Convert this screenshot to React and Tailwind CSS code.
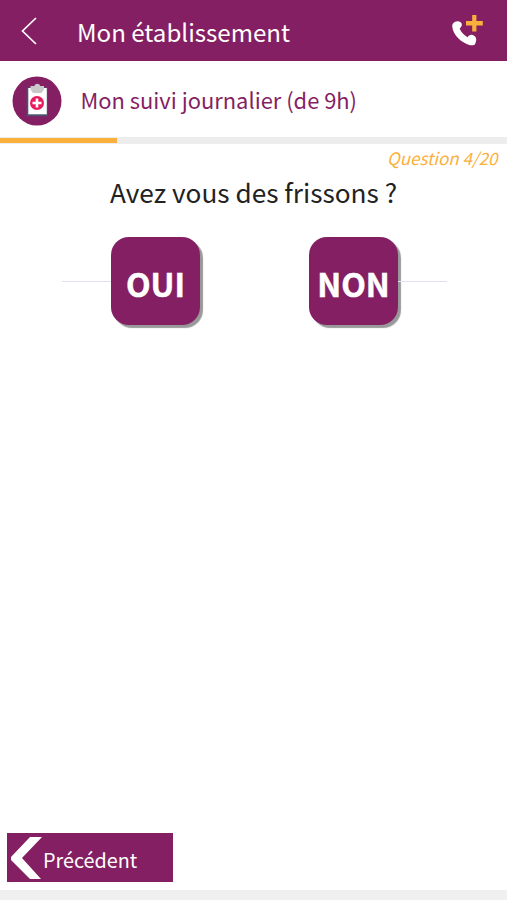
function BackIcon() {
  return (
    <svg className="h-7 w-4" viewBox="0 0 16 28" fill="none" stroke="#fff" strokeWidth="1.7">
      <path d="M15 1 L1.5 14 L15 27" />
    </svg>
  );
}

function PhoneIcon() {
  return (
    <svg className="h-8 w-8" viewBox="0 0 32 32">
      <path
        d="M1.2 8.2 C2.8 6 6.5 5.4 8.6 7.2 C10.8 9.2 9.8 11.6 7.6 13.6 C9.2 17.6 12 20.2 15.6 22.2 C16.6 20.2 19.2 19 21.8 20.4 C24.8 22.2 24.8 25 23 29.2 C21.4 31 17.2 30.6 12.8 28 C6.8 24.6 1.4 19 .4 12.4 C.1 10.6 .3 9.2 1.2 8.2 Z"
        fill="#fff"
      />
      <path d="M20.2 0 h4.2 v6.1 h6.4 v4.3 h-6.4 v6.2 h-4.2 v-6.2 h-6.2 v-4.3 h6.2 z" fill="#fbb03b" />
    </svg>
  );
}

function ClipboardIcon() {
  return (
    <svg className="size-[50px]" viewBox="0 0 50 50">
      <circle cx="25" cy="25" r="24.5" fill="#851f63" />
      <path d="M14.6 11.5 H35.8 V40.3 H14.6 Z" fill="#4b5070" />
      <path d="M16.3 12 H34.8 V38.3 H16.3 Z" fill="#fff" />
      <path d="M18.5 10 H22.5 C22.8 7 27.8 7 28.1 10 H32 V13.5 L29.5 17 H21 L18.5 13.5 Z" fill="#c9c9c9" />
      <circle cx="25" cy="27" r="7" fill="#e81b5d" />
      <path d="M25 22.5 V31.5 M20.5 27 H29.5" stroke="#fff" strokeWidth="2.6" />
    </svg>
  );
}

function Answer({ label }) {
  return (
    <button className="flex h-[88px] w-[89px] items-center justify-center rounded-[18px] bg-[#851f63] pt-[3px] text-[32px] leading-none font-bold text-white shadow-[3px_3px_1px_#999] [-webkit-text-stroke:0.5px_#fff]">
      <span>{label}</span>
    </button>
  );
}

export default function App() {
  return (
    <div className="flex h-[900px] w-[507px] flex-col overflow-hidden bg-white font-['Noto_Sans_CJK_SC',sans-serif] whitespace-nowrap">
      <header className="flex h-[61px] shrink-0 items-center bg-[#851f63] pr-[23px] pl-[21px] text-white">
        <BackIcon />
        <h1 className="ml-[40px] pt-[3px] text-[24.1px] leading-8">Mon établissement</h1>
        <div className="ml-auto">
          <PhoneIcon />
        </div>
      </header>
      <section className="flex h-[76px] shrink-0 items-center pt-[4px] pl-[12px]">
        <ClipboardIcon />
        <h2 className="-mt-[3px] ml-[18.5px] text-[21.9px] leading-8 text-[#851f63]">Mon suivi journalier (de 9h)</h2>
      </section>
      <div className="h-[7px] shrink-0 bg-[#ededed] pt-px">
        <div className="h-[5px] w-[117px] bg-[#fbb03b]" />
      </div>
      <main className="flex flex-1 flex-col">
        <p className="mt-[2px] pr-[9.5px] text-right text-[17px] leading-6 text-[#fbb03b] italic">Question 4/20</p>
        <p className="mt-[4px] text-center text-[26.2px] leading-9 text-[#222]">Avez vous des frissons ?</p>
        <div className="mt-[27px] flex items-center pl-[62px]">
          <div className="h-px w-[49px] bg-[#e0e0f2]" />
          <Answer label="OUI" />
          <div className="w-[109px]" />
          <Answer label="NON" />
          <div className="h-px w-[49px] bg-[#e0e0f2]" />
        </div>
        <button className="mt-auto mb-[8px] ml-[7px] flex h-[49px] w-[166px] items-center bg-[#851f63] pl-[4px] text-white">
          <svg className="h-[42px] w-[31px]" viewBox="0 0 31 42">
            <path d="M19 0 H31 L11 21 L30 42 H19 L0 23 V20 Z" fill="#fff" />
          </svg>
          <span className="ml-[1px] pt-[4px] text-[19.8px] leading-7">Précédent</span>
        </button>
      </main>
      <footer className="h-[10px] shrink-0 bg-[#f0f0f0]" />
    </div>
  );
}
